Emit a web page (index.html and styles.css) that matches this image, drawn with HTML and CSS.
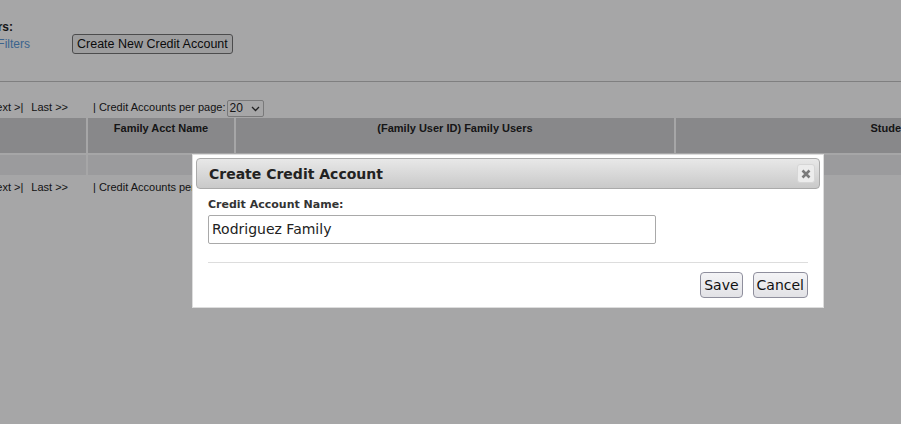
FILE: index.html
```html
<!DOCTYPE html>
<html lang="en">
<head>
    <meta charset="UTF-8">
    <title>Credit Accounts</title>
    <link rel="stylesheet" href="styles.css">
</head>
<body>
    <div class="page">
        <!-- Filters -->
        <div class="filters">
            <div class="filters-title">Filters:</div>
            <div class="filters-row">
                <a href="#" class="link">Show Filters</a>
                <button class="btn">Create New Credit Account</button>
            </div>
        </div>
        <hr class="divider">

        <div class="pager">
            <span class="pager-nav">&lt;&lt; First | &lt; Prev | Next &gt;|</span>
            <span class="pager-last">Last &gt;&gt;</span>
            <span class="pager-size">| Credit Accounts per page:</span>
            <span class="select">20 <svg width="9" height="6" viewBox="0 0 9 6"><path d="M1 1l3.5 3.5L8 1" fill="none" stroke="#333" stroke-width="1.3"/></svg></span>
        </div>

        <table class="grid">
            <colgroup>
                <col style="width:204px">
                <col style="width:146px">
                <col style="width:438px">
                <col style="width:436px">
            </colgroup>
            <tr>
                <th></th>
                <th>Family Acct Name</th>
                <th>(Family User ID) Family Users</th>
                <th>Students</th>
            </tr>
            <tr class="row">
                <td></td><td></td><td></td><td></td>
            </tr>
        </table>

        <div class="pager pager-bottom">
            <span class="pager-nav">&lt;&lt; First | &lt; Prev | Next &gt;|</span>
            <span class="pager-last">Last &gt;&gt;</span>
            <span class="pager-size">| Credit Accounts per page:</span>
        </div>
    </div>

    <div class="overlay"></div>

    <!-- Create dialog -->
    <div class="dialog">
        <div class="dialog-title">
            <span>Create Credit Account</span>
            <span class="close"><svg width="10" height="10" viewBox="0 0 10 10"><path d="M1.5 1.5l7 7M8.5 1.5l-7 7" stroke="#7a7a7a" stroke-width="2.6"/></svg></span>
        </div>
        <div class="dialog-body">
            <label class="field-label">Credit Account Name:</label>
            <div class="field">Rodriguez Family</div>
            <hr class="dialog-rule">
            <div class="dialog-buttons">
                <button class="dlg-btn">Save</button>
                <button class="dlg-btn">Cancel</button>
            </div>
        </div>
    </div>
</body>
</html>
```

FILE: styles.css
```css
body {
    margin: 0;
    overflow: hidden;
    font-family: "Liberation Sans", Arial, sans-serif;
    font-size: 11px;
    color: #222;
    background: #fff;
}
.page {
    margin-left: -120px;
    width: 1240px;
}
.filters {
    padding-top: 20px;
    padding-left: 93px;
    height: 50px;
}
.filters-title {
    font-weight: bold;
    font-size: 12px;
}
.filters-row {
    display: flex;
    align-items: center;
}
.link {
    color: #5d9ad8;
    text-decoration: none;
    font-size: 12px;
    margin-left: -9px;
    width: 108px;
}
.btn {
    font-family: "Liberation Sans", Arial, sans-serif;
    font-size: 12.5px;
    padding: 1px 4px;
    height: 20px;
    background: #f2f2f2;
    border: 1px solid #767676;
    border-radius: 3px;
    color: #111;
}
.divider {
    border: none;
    border-top: 1px solid #c4c4c4;
    margin: 11px 0 0 0;
}
.pager {
    display: flex;
    align-items: flex-end;
    height: 34px;
    padding-left: 21px;
    line-height: 17px;
}
.pager-last {
    margin-left: 8px;
}
.pager-size {
    margin-left: 25px;
}
.select {
    display: inline-flex;
    align-items: center;
    justify-content: space-between;
    width: 31px;
    height: 15px;
    padding: 0 3px 0 1px;
    margin-left: 2px;
    margin-bottom: -1px;
    border: 1px solid #bbb;
    border-radius: 2px;
    font-size: 12px;
    background: #fff;
}
.grid {
    border-spacing: 2px;
    margin: 0;
    table-layout: fixed;
}
.grid th {
    background: #d2d2d3;
    height: 35px;
    padding: 4px 0 0 0;
    vertical-align: top;
    font-size: 11px;
    box-sizing: border-box;
}
.row td {
    background: #efeff0;
    height: 20px;
    padding: 0;
}
.pager-bottom {
    align-items: center;
    height: 20px;
}
.overlay {
    position: fixed;
    inset: 0;
    background: rgba(0, 0, 2, 0.35);
}
.dialog {
    position: absolute;
    left: 192px;
    top: 154px;
    width: 624px;
    height: 146px;
    padding: 3px;
    background: #fff;
    border: 1px solid #ddd;
    font-family: "DejaVu Sans", Verdana, sans-serif;
}
.dialog-title {
    display: flex;
    align-items: center;
    justify-content: space-between;
    height: 29px;
    padding: 0 4px 0 12px;
    border: 1px solid #aaa;
    border-radius: 4px;
    background: linear-gradient(#e8e8e8, #c9c9c9);
    font-weight: bold;
    font-size: 14px;
    color: #222;
}
.close {
    display: flex;
    align-items: center;
    justify-content: center;
    width: 18px;
    height: 19px;
    border-radius: 3px;
    background: #ececec;
    border: 1px solid #d6d6d6;
    box-sizing: border-box;
}
.dialog-body {
    padding: 0 12px;
}
.field-label {
    display: block;
    margin-top: 9px;
    font-size: 11px;
    font-weight: bold;
    line-height: 13px;
    color: #333;
}
.field {
    margin-top: 4px;
    width: 448px;
    height: 29px;
    box-sizing: border-box;
    border: 1px solid #a9a9a9;
    border-radius: 2px;
    padding: 0 3px;
    font-size: 14px;
    line-height: 27px;
    color: #222;
}
.dialog-rule {
    border: none;
    border-top: 1px solid #ddd;
    margin: 18px 0 0 0;
}
.dialog-buttons {
    display: flex;
    justify-content: flex-end;
    gap: 10px;
    margin-top: 9px;
}
.dlg-btn {
    font-family: "DejaVu Sans", Verdana, sans-serif;
    font-size: 14px;
    height: 26px;
    padding: 0 3px;
    background: linear-gradient(#f4f4f6, #e2e2e6);
    border: 1px solid #8f8f9d;
    border-radius: 4px;
    color: #111;
}
```
